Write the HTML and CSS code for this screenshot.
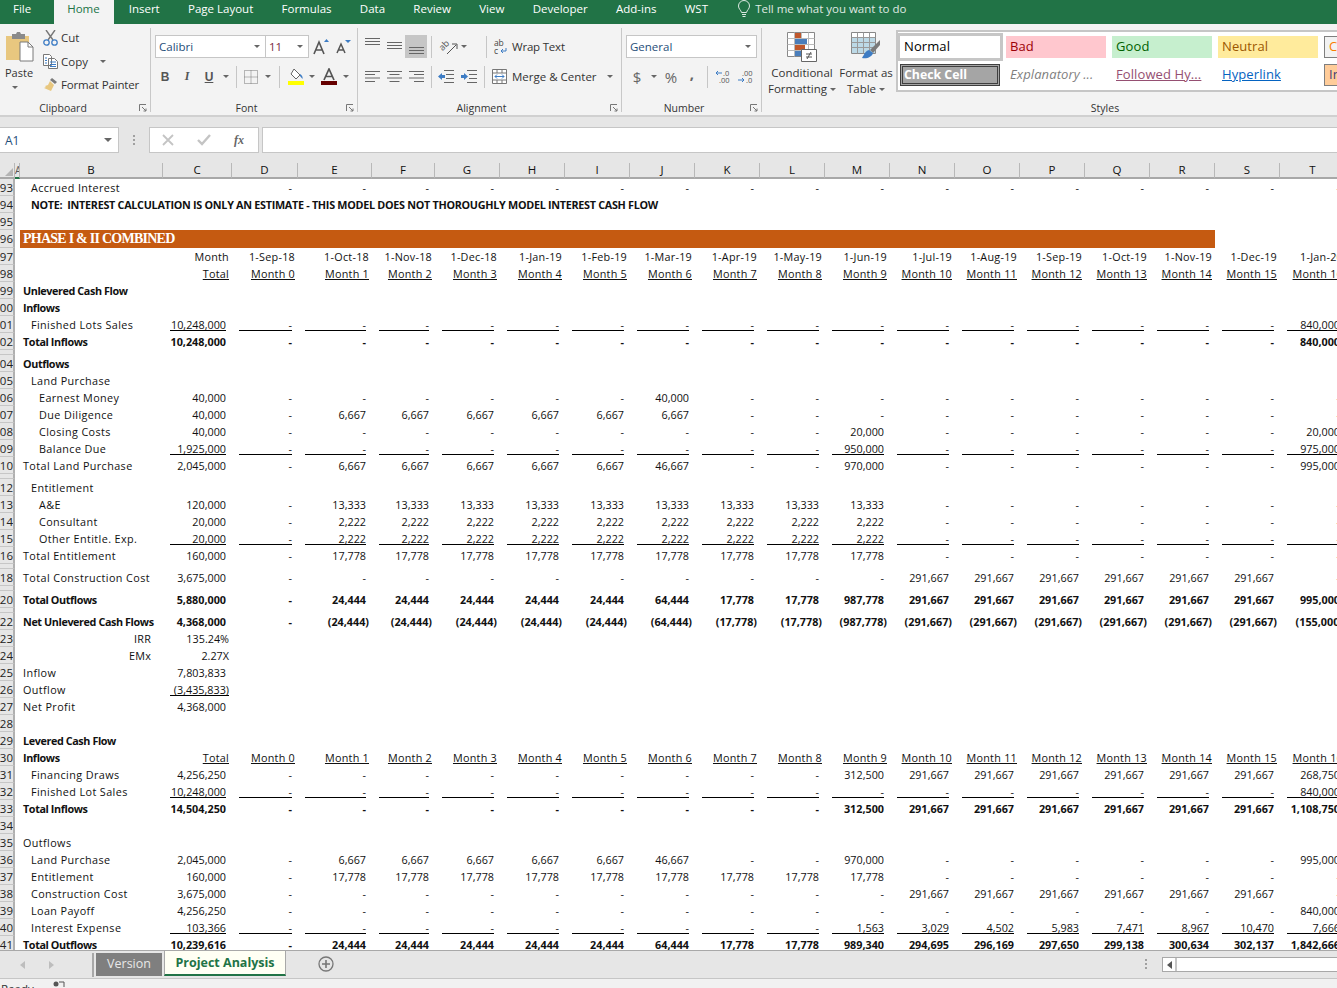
FILE: index.html
```html
<!DOCTYPE html>
<html lang="en">
<head>
<meta charset="utf-8">
<title>Project Analysis - Excel</title>
<link rel="stylesheet" href="styles.css">
</head>
<body>
<div class="app">
<nav class="tabs">
  <span class="tab file">File</span><span class="tab active">Home</span><span class="tab">Insert</span><span class="tab">Page Layout</span><span class="tab">Formulas</span><span class="tab">Data</span><span class="tab">Review</span><span class="tab">View</span><span class="tab">Developer</span><span class="tab">Add-ins</span><span class="tab">WST</span>
  <span class="tell"><svg width="14" height="18" viewBox="0 0 14 18"><path d="M4.500 12.500C4 10 1.500 9 1.500 6a5.500 5.500 0 0 1 11 0c0 3-2.500 4-3 6.500zM5 14.500h4M5.500 16.500h3" fill="none" stroke="#fff"/></svg>Tell me what you want to do</span>
</nav>
<header class="ribbon">
  <section class="group g-clip">
    <div class="body clip">
      <div class="paste">
        <svg width="28" height="30" viewBox="0 0 28 30"><path d="M0 4h23v24H0z" fill="#e8c77f"/><path d="M6 2h4l1-2h3l1 2h4v5H6z" fill="#8a8a8a"/><path d="M14 10h8l5 5v14H14z" fill="#fff" stroke="#7a7a7a"/><path d="M22 10v5h5" fill="none" stroke="#7a7a7a"/></svg>
        <span class="plabel">Paste</span><i class="caret"></i>
      </div>
      <div class="cliplist">
        <div class="clipitem"><svg width="15" height="16" viewBox="0 0 15 16"><path d="M3 0l7 10M12 0L5 10" stroke="#777" stroke-width="1.400" fill="none"/><circle cx="3.500" cy="12.500" r="2.700" fill="none" stroke="#3d7cc4" stroke-width="1.300"/><circle cx="11.500" cy="12.500" r="2.700" fill="none" stroke="#3d7cc4" stroke-width="1.300"/></svg>Cut</div>
        <div class="clipitem"><svg width="15" height="15" viewBox="0 0 15 15"><path d="M.5.500h6l2 2v9H.5zM5.500 4.500h6l3 3v7h-9z" fill="#fff" stroke="#777"/><path d="M2 4h2M2 6.500h2M2 9h2M7 8h6M7 10.500h6M7 12.500h6" stroke="#3d7cc4"/></svg>Copy<i class="caret c-copy"></i></div>
        <div class="clipitem fp"><svg width="15" height="15" viewBox="0 0 15 15"><path d="M9 1l5 4-2 2-5-4z" fill="#7a7a7a"/><path d="M7 4l4 4-3 6-7-3 2-1-1-1 3-1z" fill="#e8c77f"/></svg>Format Painter</div>
      </div>
    </div>
    <div class="glabel lab-clip">Clipboard<svg class="launch" width="8" height="8" viewBox="0 0 8 8"><path d="M.5 7V.5H7M3 3l4 4M4.500 7H7V4.500" fill="none" stroke="#777"/></svg></div>
  </section>
  <section class="group g-font">
    <div class="body rows">
      <div class="row">
        <div class="combo c-fname"><span class="blue">Calibri</span><i class="caret"></i></div>
        <div class="combo c-fsize"><span class="maroon">11</span><i class="caret"></i></div>
        <span class="ic ml2"><svg width="18" height="16" viewBox="0 0 18 16"><path d="M1 15L6 3l5 12M3 11h6" fill="none" stroke="#555" stroke-width="1.600"/><path d="M11 3l2.500-3L16 3z" fill="#3d7cc4"/></svg></span>
        <span class="ic"><svg width="16" height="14" viewBox="0 0 16 14"><path d="M1 13L5 4l4 9M2.500 10h5" fill="none" stroke="#555" stroke-width="1.500"/><path d="M9 0h6l-3 3z" fill="#3d7cc4"/></svg></span>
      </div>
      <div class="row r-fmt">
        <span class="ic bi">B</span><span class="ic ii">I</span><span class="ic ui">U</span><span class="cw"><i class="caret"></i></span>
        <span class="sep ml4"></span>
        <span class="ic ml3"><svg width="14" height="14" viewBox="0 0 14 14"><path d="M.5.500h13v13H.5zM7 .5v13M.5 7h13" fill="none" stroke="#777" stroke-dasharray="1 1"/></svg></span><span class="cw"><i class="caret"></i></span>
        <span class="sep ml5"></span>
        <span class="ic ml4"><svg width="17" height="17" viewBox="0 0 17 17"><path d="M7 1l6 6-4 4-5-5z" fill="#fff" stroke="#666"/><path d="M13 6c2 1 3 3 2.500 5L13 8z" fill="#3d7cc4"/><path d="M1 13h16v4H1z" fill="#ffff00"/></svg></span><span class="cw"><i class="caret"></i></span>
        <span class="ic"><svg width="16" height="17" viewBox="0 0 16 17"><path d="M3 12L8 1l5 11M5 8.500h6" fill="none" stroke="#555" stroke-width="1.700"/><path d="M0 13h16v4H0z" fill="#660000"/></svg></span><span class="cw"><i class="caret"></i></span>
      </div>
    </div>
    <div class="glabel">Font<svg class="launch" width="8" height="8" viewBox="0 0 8 8"><path d="M.5 7V.5H7M3 3l4 4M4.500 7H7V4.500" fill="none" stroke="#777"/></svg></div>
  </section>
  <section class="group g-align">
    <div class="body rows">
      <div class="row">
        <span class="ic"><svg width="15" height="23" viewBox="0 0 15 23"><path d="M0 3.500h15M0 6.500h15M0 9.500h15" stroke="#666"/></svg></span>
        <span class="ic"><svg width="15" height="23" viewBox="0 0 15 23"><path d="M0 7.500h15M0 10.500h15M0 13.500h15" stroke="#666"/></svg></span>
        <span class="ic sel"><svg width="15" height="23" viewBox="0 0 15 23"><path d="M0 12.500h15M0 15.500h15M0 18.500h15" stroke="#666"/></svg></span>
        <span class="sep ml4"></span>
        <span class="ic ml6"><svg class="ovf" width="18" height="16" viewBox="0 0 18 16"><text x="0" y="10" transform="rotate(-45 4 8)" class="oriented">ab</text><path d="M7 15L16 6M12 5h5v5" fill="none" stroke="#555"/></svg></span><span class="cw narrow"><i class="caret"></i></span>
        <span class="sep ml18"></span>
        <span class="wm wrap"><svg class="ovf" width="14" height="16" viewBox="0 0 14 16"><text x="0" y="7" class="wt">ab</text><text x="0" y="15" class="wt">c</text><path d="M12 9v3H8M9 10l-2 2 2 2" fill="none" stroke="#3d7cc4"/></svg>Wrap Text</span>
      </div>
      <div class="row">
        <span class="ic"><svg width="15" height="12" viewBox="0 0 15 12"><path d="M0 .5h15M0 3.500h10M0 7h15M0 10.500h10" stroke="#666"/></svg></span>
        <span class="ic"><svg width="15" height="12" viewBox="0 0 15 12"><path d="M0 .5h15M2.500 3.500h10M0 7h15M2.500 10.500h10" stroke="#666"/></svg></span>
        <span class="ic"><svg width="15" height="12" viewBox="0 0 15 12"><path d="M0 .5h15M5 3.500h10M0 7h15M5 10.500h10" stroke="#666"/></svg></span>
        <span class="sep ml4"></span>
        <span class="ic ml3"><svg width="16" height="13" viewBox="0 0 16 13"><path d="M6 .5h10M8 4.500h8M8 8.500h8M6 12.500h10" stroke="#666"/><path d="M0 6.500L4 3v2h3v3H4v2z" fill="#3d7cc4"/></svg></span>
        <span class="ic ml1"><svg width="16" height="13" viewBox="0 0 16 13"><path d="M6 .5h10M8 4.500h8M8 8.500h8M6 12.500h10" stroke="#666"/><path d="M7 6.500L3 3v2H0v3h3v2z" fill="#3d7cc4"/></svg></span>
        <span class="sep ml4"></span>
        <span class="wm merge"><svg width="15" height="15" viewBox="0 0 15 15"><path d="M.5.500h14v14H.5zM.5 4h14M.5 11h14M5 .5V4M10 .5V4M5 11v3.500M10 11v3.500" fill="#fff" stroke="#777"/><path d="M3 7.500h9M3 7.500l2-2M3 7.500l2 2M12 7.500l-2-2M12 7.500l-2 2" stroke="#3d7cc4" fill="none"/></svg>Merge &amp; Center<i class="caret c-merge"></i></span>
      </div>
    </div>
    <div class="glabel">Alignment<svg class="launch" width="8" height="8" viewBox="0 0 8 8"><path d="M.5 7V.5H7M3 3l4 4M4.500 7H7V4.500" fill="none" stroke="#777"/></svg></div>
  </section>
  <section class="group g-num">
    <div class="body rows">
      <div class="row">
        <div class="combo c-gen"><span class="blue">General</span><i class="caret"></i></div>
      </div>
      <div class="row">
        <span class="ic big">$</span><span class="cw"><i class="caret"></i></span>
        <span class="ic big pct">%</span>
        <span class="ic big comma">,</span>
        <span class="sep ml4"></span>
        <span class="ic ml5"><svg class="ovf" width="16" height="14" viewBox="0 0 16 14"><text x="7" y="6" class="dec">.0</text><text x="3" y="13" class="dec">.00</text><path d="M0 3h6M0 3l2-2M0 3l2 2" stroke="#3d7cc4" fill="none"/></svg></span>
        <span class="ic"><svg class="ovf" width="16" height="14" viewBox="0 0 16 14"><text x="4" y="6" class="dec">.00</text><text x="8" y="13" class="dec">.0</text><path d="M0 10h6M6 10l-2-2M6 10l-2 2" stroke="#3d7cc4" fill="none"/></svg></span>
      </div>
    </div>
    <div class="glabel">Number<svg class="launch" width="8" height="8" viewBox="0 0 8 8"><path d="M.5 7V.5H7M3 3l4 4M4.500 7H7V4.500" fill="none" stroke="#777"/></svg></div>
  </section>
  <section class="group g-styles">
    <div class="body styles">
      <div class="bigbtn b-cf">
        <svg width="30" height="30" viewBox="0 0 30 30"><path d="M.5.500h27v24H.5z" fill="#fff" stroke="#888"/><path d="M.5 6.500h27M.5 12.500h27M.5 18.500h27M7.500.5v24M14.500.5v24M21.500.5v24" stroke="#bbb"/><path d="M8 1h6v5H8z" fill="#c0582c"/><path d="M8 7h12v5H8z" fill="#4a7ebb"/><path d="M8 13h10v5H8z" fill="#c0582c"/><path d="M8 19h6v5H8z" fill="#4a7ebb"/><path d="M14.500 17.500h15v12h-15z" fill="#fff" stroke="#666"/><path d="M19 22h6M19 25h6M20 27l4-7" stroke="#555" fill="none"/></svg>
        <span>Conditional</span><span>Formatting<i class="caret c-in"></i></span>
      </div>
      <div class="bigbtn b-ft">
        <svg width="30" height="30" viewBox="0 0 30 30"><path d="M.5.500h24v21H.5z" fill="#fff" stroke="#888"/><path d="M1 6h23v15H1z" fill="#bcd9e6"/><path d="M.5 5.500h24M.5 10.500h24M.5 15.500h24M6.500.5v21M12.500.5v21M18.500.5v21" stroke="#999"/><path d="M29 8l-10 10 3 3 7-8z" fill="#7a7a7a"/><path d="M18 18c-4 1-5 5-7 8 5 1 10-1 11-5z" fill="#3d7cc4"/></svg>
        <span>Format as</span><span>Table<i class="caret c-in"></i></span>
      </div>
      <div class="gallery">
        <span class="st st-normal">Normal</span><span class="st st-bad">Bad</span><span class="st st-good">Good</span><span class="st st-neutral">Neutral</span><span class="st st-calc">Calculation</span>
        <span class="st st-check">Check Cell</span><span class="st st-expl">Explanatory ...</span><span class="st st-fol">Followed Hy...</span><span class="st st-link">Hyperlink</span><span class="st st-input">Input</span>
      </div>
    </div>
    <div class="glabel lab-styles">Styles</div>
  </section>
</header>
<div class="fbar">
  <div class="namebox"><span class="blue">A1</span><i class="caret c-name"></i></div>
  <div class="fdots"><b></b><b></b><b></b></div>
  <div class="fbtns">
    <svg width="12" height="12" viewBox="0 0 12 12"><path d="M1 1l10 10M11 1L1 11" stroke="#c4c4c4" stroke-width="1.800"/></svg>
    <svg width="14" height="12" viewBox="0 0 14 12"><path d="M1 6l4 4 8-9" stroke="#c4c4c4" stroke-width="2.400" fill="none"/></svg>
    <span class="fx">fx</span>
  </div>
  <div class="finput"></div>
</div>
<main class="sheet">
<table class="grid">
<colgroup><col class="c-rh"><col class="c-a"><col class="c-b"><col class="c-c"><col class="c-d"><col class="c-e"><col class="c-f"><col class="c-w"><col class="c-w"><col class="c-w"><col class="c-w"><col class="c-w"><col class="c-w"><col class="c-w"><col class="c-w"><col class="c-w"><col class="c-w"><col class="c-w"><col class="c-w"><col class="c-w"><col class="c-t"></colgroup>
<thead><tr><th class="corner"><i class="tri"></i></th><th class="colA">A</th><th>B</th><th>C</th><th>D</th><th>E</th><th>F</th><th>G</th><th>H</th><th>I</th><th>J</th><th>K</th><th>L</th><th>M</th><th>N</th><th>O</th><th>P</th><th>Q</th><th>R</th><th>S</th><th>T</th></tr></thead>
<tbody>
<tr><th>93</th><td class="a"></td><td class="l i1">Accrued Interest</td><td></td><td>-</td><td>-</td><td>-</td><td>-</td><td>-</td><td>-</td><td>-</td><td>-</td><td>-</td><td>-</td><td>-</td><td>-</td><td>-</td><td>-</td><td>-</td><td>-</td><td>-</td></tr>
<tr class="b"><th>94</th><td class="a"></td><td class="l i1 note" colspan="10">NOTE:&nbsp; INTEREST CALCULATION IS ONLY AN ESTIMATE - THIS MODEL DOES NOT THOROUGHLY MODEL INTEREST CASH FLOW</td></tr>
<tr><th>95</th></tr>
<tr class="tall"><th>96</th><td class="a"></td><td class="bar" colspan="17">PHASE I &amp; II COMBINED</td></tr>
<tr class="hd"><th>97</th><td class="a"></td><td class="l"></td><td>Month</td><td>1-Sep-18</td><td>1-Oct-18</td><td>1-Nov-18</td><td>1-Dec-18</td><td>1-Jan-19</td><td>1-Feb-19</td><td>1-Mar-19</td><td>1-Apr-19</td><td>1-May-19</td><td>1-Jun-19</td><td>1-Jul-19</td><td>1-Aug-19</td><td>1-Sep-19</td><td>1-Oct-19</td><td>1-Nov-19</td><td>1-Dec-19</td><td>1-Jan-20</td></tr>
<tr class="hd"><th>98</th><td class="a"></td><td class="l"></td><td><u>Total</u></td><td><u>Month 0</u></td><td><u>Month 1</u></td><td><u>Month 2</u></td><td><u>Month 3</u></td><td><u>Month 4</u></td><td><u>Month 5</u></td><td><u>Month 6</u></td><td><u>Month 7</u></td><td><u>Month 8</u></td><td><u>Month 9</u></td><td><u>Month 10</u></td><td><u>Month 11</u></td><td><u>Month 12</u></td><td><u>Month 13</u></td><td><u>Month 14</u></td><td><u>Month 15</u></td><td><u>Month 16</u></td></tr>
<tr class="b"><th>99</th><td class="a"></td><td class="l">Unlevered Cash Flow</td></tr>
<tr class="b"><th>100</th><td class="a"></td><td class="l">Inflows</td></tr>
<tr class="ul"><th>101</th><td class="a"></td><td class="l i1">Finished Lots Sales</td><td>10,248,000</td><td>-</td><td>-</td><td>-</td><td>-</td><td>-</td><td>-</td><td>-</td><td>-</td><td>-</td><td>-</td><td>-</td><td>-</td><td>-</td><td>-</td><td>-</td><td>-</td><td>840,000</td></tr>
<tr class="b"><th>102</th><td class="a"></td><td class="l">Total Inflows</td><td>10,248,000</td><td>-</td><td>-</td><td>-</td><td>-</td><td>-</td><td>-</td><td>-</td><td>-</td><td>-</td><td>-</td><td>-</td><td>-</td><td>-</td><td>-</td><td>-</td><td>-</td><td>840,000</td></tr>
<tr class="gap"><th></th></tr>
<tr class="b"><th>104</th><td class="a"></td><td class="l">Outflows</td></tr>
<tr><th>105</th><td class="a"></td><td class="l i1">Land Purchase</td></tr>
<tr><th>106</th><td class="a"></td><td class="l i2">Earnest Money</td><td>40,000</td><td>-</td><td>-</td><td>-</td><td>-</td><td>-</td><td>-</td><td>40,000</td><td>-</td><td>-</td><td>-</td><td>-</td><td>-</td><td>-</td><td>-</td><td>-</td><td>-</td><td>-</td></tr>
<tr><th>107</th><td class="a"></td><td class="l i2">Due Diligence</td><td>40,000</td><td>-</td><td>6,667</td><td>6,667</td><td>6,667</td><td>6,667</td><td>6,667</td><td>6,667</td><td>-</td><td>-</td><td>-</td><td>-</td><td>-</td><td>-</td><td>-</td><td>-</td><td>-</td><td>-</td></tr>
<tr><th>108</th><td class="a"></td><td class="l i2">Closing Costs</td><td>40,000</td><td>-</td><td>-</td><td>-</td><td>-</td><td>-</td><td>-</td><td>-</td><td>-</td><td>-</td><td>20,000</td><td>-</td><td>-</td><td>-</td><td>-</td><td>-</td><td>-</td><td>20,000</td></tr>
<tr class="ul"><th>109</th><td class="a"></td><td class="l i2">Balance Due</td><td>1,925,000</td><td>-</td><td>-</td><td>-</td><td>-</td><td>-</td><td>-</td><td>-</td><td>-</td><td>-</td><td>950,000</td><td>-</td><td>-</td><td>-</td><td>-</td><td>-</td><td>-</td><td>975,000</td></tr>
<tr><th>110</th><td class="a"></td><td class="l">Total Land Purchase</td><td>2,045,000</td><td>-</td><td>6,667</td><td>6,667</td><td>6,667</td><td>6,667</td><td>6,667</td><td>46,667</td><td>-</td><td>-</td><td>970,000</td><td>-</td><td>-</td><td>-</td><td>-</td><td>-</td><td>-</td><td>995,000</td></tr>
<tr class="gap"><th></th></tr>
<tr><th>112</th><td class="a"></td><td class="l i1">Entitlement</td></tr>
<tr><th>113</th><td class="a"></td><td class="l i2">A&amp;E</td><td>120,000</td><td>-</td><td>13,333</td><td>13,333</td><td>13,333</td><td>13,333</td><td>13,333</td><td>13,333</td><td>13,333</td><td>13,333</td><td>13,333</td><td>-</td><td>-</td><td>-</td><td>-</td><td>-</td><td>-</td><td>-</td></tr>
<tr><th>114</th><td class="a"></td><td class="l i2">Consultant</td><td>20,000</td><td>-</td><td>2,222</td><td>2,222</td><td>2,222</td><td>2,222</td><td>2,222</td><td>2,222</td><td>2,222</td><td>2,222</td><td>2,222</td><td>-</td><td>-</td><td>-</td><td>-</td><td>-</td><td>-</td><td>-</td></tr>
<tr class="ul"><th>115</th><td class="a"></td><td class="l i2">Other Entitle. Exp.</td><td>20,000</td><td>-</td><td>2,222</td><td>2,222</td><td>2,222</td><td>2,222</td><td>2,222</td><td>2,222</td><td>2,222</td><td>2,222</td><td>2,222</td><td>-</td><td>-</td><td>-</td><td>-</td><td>-</td><td>-</td><td>-</td></tr>
<tr><th>116</th><td class="a"></td><td class="l">Total Entitlement</td><td>160,000</td><td>-</td><td>17,778</td><td>17,778</td><td>17,778</td><td>17,778</td><td>17,778</td><td>17,778</td><td>17,778</td><td>17,778</td><td>17,778</td><td>-</td><td>-</td><td>-</td><td>-</td><td>-</td><td>-</td><td>-</td></tr>
<tr class="gap"><th></th></tr>
<tr><th>118</th><td class="a"></td><td class="l">Total Construction Cost</td><td>3,675,000</td><td>-</td><td>-</td><td>-</td><td>-</td><td>-</td><td>-</td><td>-</td><td>-</td><td>-</td><td>-</td><td>291,667</td><td>291,667</td><td>291,667</td><td>291,667</td><td>291,667</td><td>291,667</td><td>-</td></tr>
<tr class="gap"><th></th></tr>
<tr class="b"><th>120</th><td class="a"></td><td class="l">Total Outflows</td><td>5,880,000</td><td>-</td><td>24,444</td><td>24,444</td><td>24,444</td><td>24,444</td><td>24,444</td><td>64,444</td><td>17,778</td><td>17,778</td><td>987,778</td><td>291,667</td><td>291,667</td><td>291,667</td><td>291,667</td><td>291,667</td><td>291,667</td><td>995,000</td></tr>
<tr class="gap"><th></th></tr>
<tr class="b"><th>122</th><td class="a"></td><td class="l">Net Unlevered Cash Flows</td><td>4,368,000</td><td>-</td><td class="p">(24,444)</td><td class="p">(24,444)</td><td class="p">(24,444)</td><td class="p">(24,444)</td><td class="p">(24,444)</td><td class="p">(64,444)</td><td class="p">(17,778)</td><td class="p">(17,778)</td><td class="p">(987,778)</td><td class="p">(291,667)</td><td class="p">(291,667)</td><td class="p">(291,667)</td><td class="p">(291,667)</td><td class="p">(291,667)</td><td class="p">(291,667)</td><td class="p">(155,000)</td></tr>
<tr><th>123</th><td class="a"></td><td class="lr">IRR</td><td class="p">135.24%</td></tr>
<tr><th>124</th><td class="a"></td><td class="lr">EMx</td><td class="p">2.27X</td></tr>
<tr><th>125</th><td class="a"></td><td class="l">Inflow</td><td>7,803,833</td></tr>
<tr class="ul"><th>126</th><td class="a"></td><td class="l">Outflow</td><td class="p">(3,435,833)</td></tr>
<tr><th>127</th><td class="a"></td><td class="l">Net Profit</td><td>4,368,000</td></tr>
<tr><th>128</th></tr>
<tr class="b"><th>129</th><td class="a"></td><td class="l">Levered Cash Flow</td></tr>
<tr class="hd"><th>130</th><td class="a"></td><td class="l lb">Inflows</td><td><u>Total</u></td><td><u>Month 0</u></td><td><u>Month 1</u></td><td><u>Month 2</u></td><td><u>Month 3</u></td><td><u>Month 4</u></td><td><u>Month 5</u></td><td><u>Month 6</u></td><td><u>Month 7</u></td><td><u>Month 8</u></td><td><u>Month 9</u></td><td><u>Month 10</u></td><td><u>Month 11</u></td><td><u>Month 12</u></td><td><u>Month 13</u></td><td><u>Month 14</u></td><td><u>Month 15</u></td><td><u>Month 16</u></td></tr>
<tr><th>131</th><td class="a"></td><td class="l i1">Financing Draws</td><td>4,256,250</td><td>-</td><td>-</td><td>-</td><td>-</td><td>-</td><td>-</td><td>-</td><td>-</td><td>-</td><td>312,500</td><td>291,667</td><td>291,667</td><td>291,667</td><td>291,667</td><td>291,667</td><td>291,667</td><td>268,750</td></tr>
<tr class="ul"><th>132</th><td class="a"></td><td class="l i1">Finished Lot Sales</td><td>10,248,000</td><td>-</td><td>-</td><td>-</td><td>-</td><td>-</td><td>-</td><td>-</td><td>-</td><td>-</td><td>-</td><td>-</td><td>-</td><td>-</td><td>-</td><td>-</td><td>-</td><td>840,000</td></tr>
<tr class="b"><th>133</th><td class="a"></td><td class="l">Total Inflows</td><td>14,504,250</td><td>-</td><td>-</td><td>-</td><td>-</td><td>-</td><td>-</td><td>-</td><td>-</td><td>-</td><td>312,500</td><td>291,667</td><td>291,667</td><td>291,667</td><td>291,667</td><td>291,667</td><td>291,667</td><td>1,108,750</td></tr>
<tr><th>134</th></tr>
<tr><th>135</th><td class="a"></td><td class="l">Outflows</td></tr>
<tr><th>136</th><td class="a"></td><td class="l i1">Land Purchase</td><td>2,045,000</td><td>-</td><td>6,667</td><td>6,667</td><td>6,667</td><td>6,667</td><td>6,667</td><td>46,667</td><td>-</td><td>-</td><td>970,000</td><td>-</td><td>-</td><td>-</td><td>-</td><td>-</td><td>-</td><td>995,000</td></tr>
<tr><th>137</th><td class="a"></td><td class="l i1">Entitlement</td><td>160,000</td><td>-</td><td>17,778</td><td>17,778</td><td>17,778</td><td>17,778</td><td>17,778</td><td>17,778</td><td>17,778</td><td>17,778</td><td>17,778</td><td>-</td><td>-</td><td>-</td><td>-</td><td>-</td><td>-</td><td>-</td></tr>
<tr><th>138</th><td class="a"></td><td class="l i1">Construction Cost</td><td>3,675,000</td><td>-</td><td>-</td><td>-</td><td>-</td><td>-</td><td>-</td><td>-</td><td>-</td><td>-</td><td>-</td><td>291,667</td><td>291,667</td><td>291,667</td><td>291,667</td><td>291,667</td><td>291,667</td><td>-</td></tr>
<tr><th>139</th><td class="a"></td><td class="l i1">Loan Payoff</td><td>4,256,250</td><td>-</td><td>-</td><td>-</td><td>-</td><td>-</td><td>-</td><td>-</td><td>-</td><td>-</td><td>-</td><td>-</td><td>-</td><td>-</td><td>-</td><td>-</td><td>-</td><td>840,000</td></tr>
<tr class="ul"><th>140</th><td class="a"></td><td class="l i1">Interest Expense</td><td>103,366</td><td>-</td><td>-</td><td>-</td><td>-</td><td>-</td><td>-</td><td>-</td><td>-</td><td>-</td><td>1,563</td><td>3,029</td><td>4,502</td><td>5,983</td><td>7,471</td><td>8,967</td><td>10,470</td><td>7,666</td></tr>
<tr class="b"><th>141</th><td class="a"></td><td class="l">Total Outflows</td><td>10,239,616</td><td>-</td><td>24,444</td><td>24,444</td><td>24,444</td><td>24,444</td><td>24,444</td><td>64,444</td><td>17,778</td><td>17,778</td><td>989,340</td><td>294,695</td><td>296,169</td><td>297,650</td><td>299,138</td><td>300,634</td><td>302,137</td><td>1,842,666</td></tr>
</tbody>
</table>
</main>
<div class="sheetbar">
  <div class="navs"><i class="arrow left"></i><i class="arrow right"></i></div>
  <span class="stab version">Version</span>
  <span class="stab current">Project Analysis</span>
  <span class="plus"><svg width="16" height="16" viewBox="0 0 16 16"><circle cx="8" cy="8" r="7" fill="none" stroke="#777" stroke-width="1.300"/><path d="M8 4v8M4 8h8" stroke="#777" stroke-width="1.600"/></svg></span>
  <div class="sbdots"><b></b><b></b><b></b></div>
  <div class="hscroll"><span class="sbleft"><i class="arrow left dark"></i></span></div>
</div>
<footer class="status"><span>Ready</span><svg width="12" height="8" viewBox="0 0 12 8"><circle cx="3" cy="3" r="2.500" fill="#555"/><path d="M6 1h5v5" fill="none" stroke="#555"/></svg></footer>
</div>
</body>
</html>
```
FILE: styles.css
```css
* { box-sizing: border-box; }
html, body { margin: 0; height: 988px; overflow: hidden; }
body { font-family: "Open Sans", "Noto Sans", sans-serif; font-size: 11px; color: #000; background: #fff; }
.app { width: 1337px; height: 988px; display: flex; flex-direction: column; overflow: hidden; }
i { display: block; }

.tabs { height: 24px; background: #217346; display: flex; align-items: stretch; color: #fff; font-size: 11.500px; flex: none; }
.tab { padding: 0 14.150px; line-height: 18px; white-space: nowrap; }
.tab.file { padding: 0 23px 0 13px; }
.tab.active { background: #f3f3f3; color: #217346; padding: 0 14px 0 13px; }
.tab.active + .tab { padding-left: 15px; }
.tell { display: flex; align-items: flex-start; gap: 4px; line-height: 18px; margin-left: 15px; opacity: .85; }

.ribbon { height: 93px; background: #f3f3f3; border-bottom: 2px solid #d0d0d0; display: flex; padding-top: 4px; flex: none; overflow: hidden; }
.group { height: 84px; display: flex; flex-direction: column; border-right: 1px solid #c8c8c8; flex: none; position: relative; }
.body { height: 72px; }
.glabel { height: 12px; line-height: 16px; font-size: 10.500px; color: #333; text-align: center; display: block; white-space: nowrap; padding-right: 19px; }
.launch { position: absolute; right: 3px; bottom: 0; }
.lab-clip { padding-right: 24px; }
.g-clip { width: 151px; }
.g-font { width: 207px; padding-left: 4px; }
.g-align { width: 264px; padding-left: 3px; }
.g-num { width: 140px; padding-left: 4px; }
.g-styles { flex: 1; border-right: 0; }
.lab-styles { padding: 0 0 0 107px; }

.clip { display: flex; }
.paste { width: 43px; padding: 4px 0 0 6px; display: flex; flex-direction: column; color: #333; font-size: 11.500px; }
.plabel { margin: 3px 0 0 -1px; line-height: 16px; font-size: 11px; }
.paste .caret { margin: 5px 0 0 6px; }
.cliplist { margin-top: -2px; }
.clipitem { height: 23.500px; display: flex; align-items: center; gap: 3px; font-size: 11.500px; color: #333; white-space: nowrap; }
.fp { letter-spacing: -.15px; }
.c-copy { margin-left: 9px; }

.caret { width: 0; height: 0; border: 3px solid transparent; border-top: 3.500px solid #666; border-bottom: 0; }
.rows { display: flex; flex-direction: column; gap: 7px; padding-top: 7px; }
.row { height: 23px; display: flex; align-items: center; }
.r-fmt { margin-left: -1px; }
.combo { height: 23px; background: #fff; border: 1px solid #c6c6c6; display: flex; align-items: center; justify-content: space-between; padding: 0 5px 0 3px; font-size: 11.500px; }
.c-fname { width: 111px; }
.c-fsize { width: 43px; border-left: 0; }
.c-gen { width: 131px; }
.blue { color: #1f4e79; }
.maroon { color: #7a2b40; }
.ic { width: 22px; height: 23px; display: flex; align-items: center; justify-content: center; flex: none; color: #555; }
.ovf { overflow: visible; }
.bi, .ii, .ui { font-size: 12px; font-weight: 700; font-family: "Liberation Sans", sans-serif; }
.ii { font-style: italic; font-family: "Liberation Serif", serif; }
.ui { text-decoration: underline; }
.sel { background: #c6c6c6; }
.cw { width: 12px; display: flex; justify-content: center; flex: none; }
.cw.narrow { width: 8px; }
.sep { width: 1px; height: 22px; background: #c6c6c6; flex: none; }
.ml1 { margin-left: 1px; } .ml2 { margin-left: 2px; } .ml3 { margin-left: 3px; } .ml4 { margin-left: 4px; } .ml5 { margin-left: 5px; } .ml6 { margin-left: 6px; } .ml18 { margin-left: 18px; }
.wm { display: flex; align-items: center; gap: 5px; font-size: 11.500px; color: #333; margin-left: 9px; white-space: nowrap; }
.wrap { gap: 4px; letter-spacing: -.2px; margin-left: 7px; }
.merge { margin-left: 7px; }
.c-merge { margin-left: 5px; }
.oriented { font-size: 9px; fill: #555; font-family: "Open Sans", sans-serif; }
.wt { font-size: 8.500px; fill: #444; font-family: "Open Sans", sans-serif; }
.dec { font-size: 7.500px; fill: #555; font-family: "Open Sans", sans-serif; }
.big { font-size: 15px; color: #666; }
.pct { margin-left: 0; }
.comma { font-weight: 700; margin-left: -1px; padding-bottom: 8px; }

.styles { display: flex; padding-top: 4px; }
.bigbtn { display: flex; flex-direction: column; align-items: center; font-size: 11.500px; line-height: 16px; color: #333; white-space: nowrap; flex: none; }
.bigbtn svg { margin-bottom: 3px; }
.bigbtn span { display: flex; align-items: center; gap: 3px; }
.b-cf { width: 76px; margin-left: 2px; }
.b-ft { width: 52px; }
.gallery { width: 445px; height: 62px; margin: -2px 0 0 4px; background: #fff; border: 2px solid #c6c6c6; border-right: 0; padding: 4px 0 0 2px; display: grid; grid-template-columns: repeat(5, 100px); grid-auto-rows: 22px; gap: 6px; overflow: hidden; }
.st { font-size: 13px; letter-spacing: .1px; line-height: 20px; padding-left: 4px; white-space: nowrap; overflow: hidden; }
.st-normal { outline: 3px solid #c6c6c6; }
.st-bad { background: #ffc7ce; color: #9c0006; }
.st-good { background: #c6efce; color: #006100; }
.st-neutral { background: #ffeb9c; color: #9c5700; }
.st-calc { background: #f2f2f2; color: #fa7d00; border: 1px solid #7f7f7f; line-height: 18px; }
.st-check { background: #a5a5a5; color: #fff; font-weight: 700; font-size: 12.300px; letter-spacing: 0; border: 3px double #3f3f3f; line-height: 16px; padding-left: 1px; }
.st-expl { color: #7f7f7f; font-style: italic; }
.st-fol { color: #954f72; text-decoration: underline; }
.st-link { color: #0563c1; text-decoration: underline; }
.st-input { background: #ffcc99; color: #3f3f76; border: 1px solid #7f7f7f; line-height: 18px; }

.fbar { height: 46px; background: #e6e6e6; padding: 10px 0; display: flex; flex: none; }
.namebox { width: 119px; background: #fff; border: 1px solid #c6c6c6; border-left: 0; display: flex; align-items: center; justify-content: space-between; padding: 0 6px 0 5px; font-size: 12px; }
.c-name { border-width: 4px; border-top-width: 4.500px; border-bottom-width: 0; }
.fdots { width: 30px; display: flex; flex-direction: column; align-items: center; justify-content: center; gap: 2px; }
.fdots b, .sbdots b { width: 2px; height: 2px; background: #a0a0a0; display: block; }
.fbtns { width: 110px; background: #fff; border: 1px solid #c6c6c6; display: flex; align-items: center; gap: 23px; padding-left: 12px; }
.fx { font-family: "Liberation Serif", serif; font-style: italic; font-weight: 700; color: #666; font-size: 12px; }
.finput { flex: 1; margin-left: 3px; background: #fff; border: 1px solid #c6c6c6; border-right: 0; }

.sheet { height: 787px; overflow: hidden; flex: none; }
.grid { table-layout: fixed; border-collapse: separate; border-spacing: 0; width: 1345px; }
.c-rh { width: 15px; } .c-a { width: 5px; } .c-b { width: 143px; } .c-c { width: 69px; } .c-d { width: 66px; } .c-e { width: 74px; } .c-f { width: 63px; } .c-w { width: 65px; } .c-t { width: 66px; }
.grid thead th { height: 16px; background: #e6e6e6; border-right: 1px solid #b8b8b8; border-bottom: 2px solid #a8a8a8; font-weight: 400; font-size: 11.500px; line-height: 14px; padding: 0; overflow: hidden; color: #111; }
.tri { width: 0; height: 0; border-style: solid; border-width: 0 0 8px 8px; border-color: transparent transparent #b4b4b4 transparent; margin: 4px 0 0 5px; }
.grid .colA { border-bottom-color: #217346; color: #555; font-size: 10px; }
.grid tbody tr { height: 17px; }
.grid tbody tr.tall { height: 18px; }
.grid tbody tr.gap { height: 5px; }
.grid tbody th { background: #e6e6e6; border-right: 2px solid #b0b0b0; border-bottom: 1px solid #c6c6c6; font-weight: 400; font-size: 11.500px; line-height: 15px; padding: 0 2px 0 0; text-align: right; direction: rtl; white-space: nowrap; overflow: hidden; color: #222; }
.grid tbody tr.gap th { line-height: 4px; }
.grid td { padding: 0 6px 0 0; text-align: right; font-size: 10.800px; line-height: 16px; white-space: nowrap; overflow: hidden; color: #111; }
.grid td.a { padding: 0; }
.grid td.l { text-align: left; padding: 0 0 0 3px; overflow: visible; letter-spacing: .4px; }
.grid td.i1 { padding-left: 11px; }
.grid td.i2 { padding-left: 19px; }
.grid td.lr { padding-right: 12px; letter-spacing: .2px; }
.grid td.p { padding-right: 3px; }
.b td { font-weight: 700; }
.grid .b td.l, .grid td.l.lb { letter-spacing: -.4px; }
.grid .b td.note { letter-spacing: -.29px; }
.lb { font-weight: 700; }
.hd td { padding-right: 3px; letter-spacing: .25px; }
.hd td.l { padding-right: 0; }
.ul td:not(.a):not(.l) { background: linear-gradient(#000, #000) no-repeat 7px 14px; background-size: calc(100% - 13px) 1px; }
.ul td.p:not(.a):not(.l) { background-size: calc(100% - 10px) 1px; }
.grid td.bar { background: #c55a11; color: #fff; font-family: "Liberation Serif", serif; font-weight: 700; font-size: 14px; letter-spacing: -.75px; text-align: left; padding: 0 0 0 3px; line-height: 18px; }

.sheetbar { height: 29px; background: #e6e6e6; border-top: 1px solid #a8a8a8; border-bottom: 1px solid #c6c6c6; display: flex; align-items: flex-start; flex: none; }
.navs { width: 94px; height: 24px; margin-top: 2px; border-right: 2px solid #a8a8a8; display: flex; align-items: center; gap: 24px; padding-left: 20px; }
.arrow { width: 0; height: 0; border-style: solid; border-color: transparent; border-width: 4px 0 4px 5px; border-left-color: #bdbdbd; }
.arrow.left { border-width: 4px 5px 4px 0; border-right-color: #bdbdbd; border-left-color: transparent; }
.arrow.dark.left { border-right-color: #555; }
.stab { display: block; flex: none; }
.version { width: 66px; height: 23px; margin: 2px 0 0 2px; background: #7f7f7f; color: #e8e8e8; font-size: 12.500px; line-height: 22px; text-align: center; }
.current { width: 122px; height: 25px; margin-left: 2px; background: #fffff4; border: 1px solid #a8a8a8; border-top: 0; border-bottom: 2px solid #217346; color: #217346; font-weight: 700; font-size: 12.500px; line-height: 24px; text-align: center; }
.plus { margin: 5px 0 0 32px; width: 16px; height: 16px; }
.sbdots { margin: 8px 0 0 811px; width: 2px; display: flex; flex-direction: column; gap: 2px; }
.hscroll { margin: 6px 0 0 15px; flex: 1; height: 15px; background: #fff; border: 1px solid #a8a8a8; border-right: 0; }
.sbleft { width: 14px; height: 13px; display: flex; align-items: center; justify-content: center; border-right: 2px solid #c6c6c6; }

.status { height: 9px; background: #f1f1f1; overflow: hidden; display: flex; gap: 19px; font-size: 11.500px; line-height: 16px; color: #333; flex: none; padding: 2px 0 0 1px; }
```
